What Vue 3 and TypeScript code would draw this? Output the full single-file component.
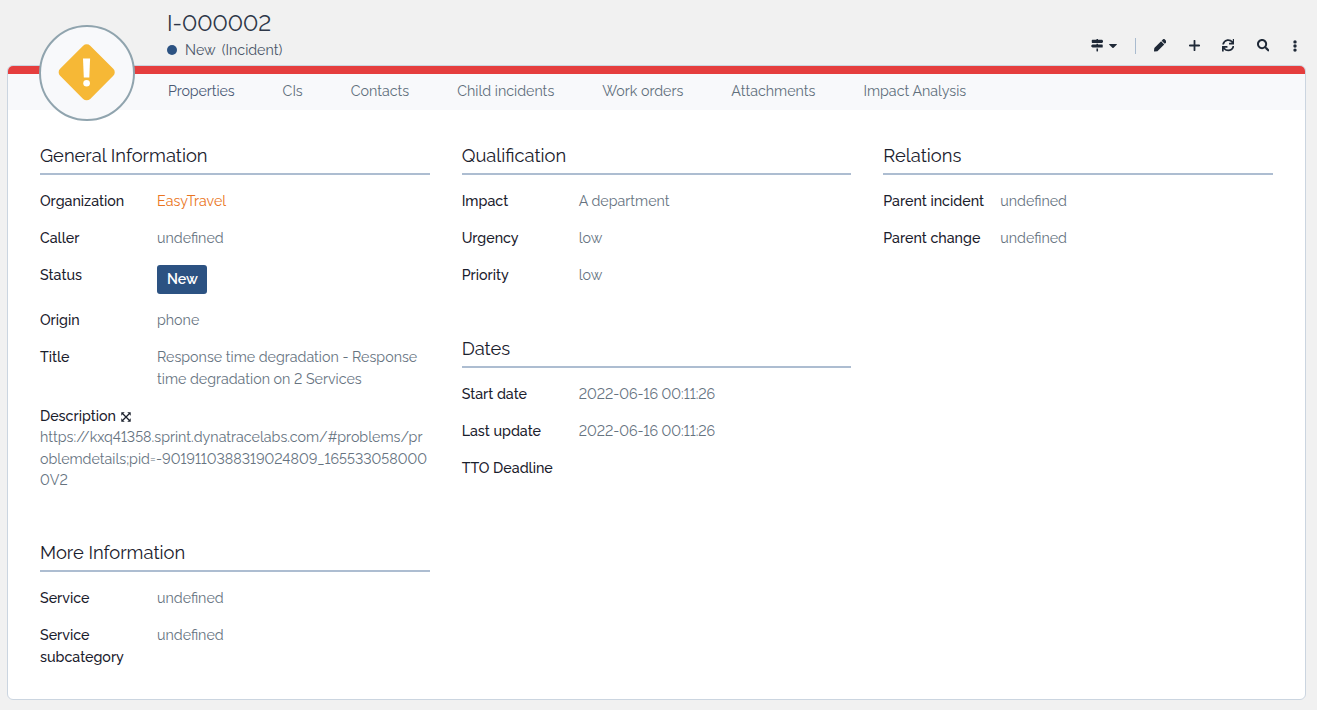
<script setup lang="ts">
interface Field { label: string; value: string; kind?: 'link' | 'badge' | 'block' }
interface Section { title: string; fields: Field[] }

const tabs: string[] = [
  'Properties', 'CIs', 'Contacts', 'Child incidents', 'Work orders', 'Attachments', 'Impact Analysis',
]

const columns: Section[][] = [
  [
    {
      title: 'General Information',
      fields: [
        { label: 'Organization', value: 'EasyTravel', kind: 'link' },
        { label: 'Caller', value: 'undefined' },
        { label: 'Status', value: 'New', kind: 'badge' },
        { label: 'Origin', value: 'phone' },
        { label: 'Title', value: 'Response time degradation - Response time degradation on 2 Services' },
        {
          label: 'Description',
          value: 'https://kxq41358.sprint.dynatracelabs.com/#problems/problemdetails;pid=-9019110388319024809_1655330580000V2',
          kind: 'block',
        },
      ],
    },
    {
      title: 'More Information',
      fields: [
        { label: 'Service', value: 'undefined' },
        { label: 'Service subcategory', value: 'undefined' },
      ],
    },
  ],
  [
    {
      title: 'Qualification',
      fields: [
        { label: 'Impact', value: 'A department' },
        { label: 'Urgency', value: 'low' },
        { label: 'Priority', value: 'low' },
      ],
    },
    {
      title: 'Dates',
      fields: [
        { label: 'Start date', value: '2022-06-16 00:11:26' },
        { label: 'Last update', value: '2022-06-16 00:11:26' },
        { label: 'TTO Deadline', value: '' },
      ],
    },
  ],
  [
    {
      title: 'Relations',
      fields: [
        { label: 'Parent incident', value: 'undefined' },
        { label: 'Parent change', value: 'undefined' },
      ],
    },
  ],
]
</script>

<template>
  <main class="page">
    <header class="header">
      <div class="heading">
        <h1 class="name">I-000002</h1>
        <div class="state">
          <i class="dot"></i>
          <span>New</span>
          <span class="kind">(Incident)</span>
        </div>
      </div>
      <nav class="tools">
        <svg class="signs" viewBox="0 0 512 512"><path d="M507.31 84.69L464 41.37c-6-6-14.14-9.37-22.63-9.37H288V16c0-8.84-7.16-16-16-16h-32c-8.84 0-16 7.16-16 16v16H56c-13.25 0-24 10.75-24 24v80c0 13.25 10.75 24 24 24h385.37c8.49 0 16.62-3.37 22.63-9.37l43.31-43.31c6.25-6.26 6.25-16.38 0-22.63zM224 496c0 8.84 7.16 16 16 16h32c8.84 0 16-7.16 16-16V384h-64v112zm232-272H288v-32h-64v32H70.63c-8.49 0-16.62 3.37-22.63 9.37L4.69 276.69c-6.25 6.25-6.25 16.38 0 22.63L48 342.63c6 6 14.14 9.37 22.63 9.37H456c13.25 0 24-10.75 24-24v-80c0-13.25-10.75-24-24-24z" /></svg>
        <svg class="caret" viewBox="0 0 8 4"><path d="M.6 0h6.8q.9.1.3.8L4.6 3.7q-.6.5-1.2 0L.3.8Q-.3.1.6 0z" /></svg>
        <i class="separator"></i>
        <svg class="pen" viewBox="0 0 512 512"><path d="M290.74 93.24l128.02 128.02-277.99 277.99-114.14 12.6C11.35 513.54-1.56 500.62.14 485.34l12.7-114.22 277.9-277.88zm207.2-19.06l-60.11-60.11c-18.75-18.75-49.16-18.75-67.91 0l-56.55 56.55 128.02 128.02 56.55-56.55c18.75-18.76 18.75-49.16 0-67.91z" /></svg>
        <svg class="plus" viewBox="0 0 11 11"><path d="M5.5.8v9.4M.8 5.5h9.4" fill="none" stroke="#1f2937" stroke-width="1.8" stroke-linecap="round" /></svg>
        <svg class="sync" viewBox="0 0 512 512"><path d="M440.65 12.57l4 82.77A247.16 247.16 0 0 0 255.83 8C134.73 8 33.91 94.92 12.29 209.82A12 12 0 0 0 24.09 224h49.05a12 12 0 0 0 11.67-9.26 175.91 175.91 0 0 1 317-56.94l-101.46-4.86a12 12 0 0 0-12.57 12v47.41a12 12 0 0 0 12 12H500a12 12 0 0 0 12-12V12a12 12 0 0 0-12-12h-47.37a12 12 0 0 0-11.98 12.57zM255.83 432a175.61 175.61 0 0 1-146-77.8l101.8 4.87a12 12 0 0 0 12.57-12v-47.4a12 12 0 0 0-12-12H12a12 12 0 0 0-12 12V500a12 12 0 0 0 12 12h47.35a12 12 0 0 0 12-12.6l-4.15-82.57A247.17 247.17 0 0 0 255.83 504c121.11 0 221.93-86.92 243.55-201.82a12 12 0 0 0-11.8-14.18h-49.05a12 12 0 0 0-11.67 9.26A175.86 175.86 0 0 1 255.83 432z" /></svg>
        <svg class="search" viewBox="0 0 512 512"><path d="M505 442.7L405.3 343c-4.5-4.5-10.6-7-17-7H372c27.6-35.3 44-79.7 44-128C416 93.1 322.9 0 208 0S0 93.1 0 208s93.1 208 208 208c48.3 0 92.7-16.4 128-44v16.3c0 6.4 2.5 12.5 7 17l99.7 99.7c9.4 9.4 24.6 9.4 33.9 0l28.3-28.3c9.4-9.4 9.4-24.6.1-34zM208 336c-70.7 0-128-57.2-128-128 0-70.7 57.2-128 128-128 70.7 0 128 57.2 128 128 0 70.7-57.2 128-128 128z" /></svg>
        <svg class="more" viewBox="0 0 4 12"><circle cx="2" cy="1.9" r="1.7" /><circle cx="2" cy="6" r="1.7" /><circle cx="2" cy="10.1" r="1.7" /></svg>
      </nav>
    </header>

    <section class="card">
      <div class="stripe"></div>
      <nav class="tabs">
        <a v-for="(tab, i) in tabs" :key="tab" class="tab" :class="{ active: i === 0 }">{{ tab }}</a>
      </nav>
      <div class="columns">
        <div v-for="(column, c) in columns" :key="c" class="column">
          <section v-for="section in column" :key="section.title">
            <h2 class="title">{{ section.title }}</h2>
            <div class="fields">
              <div v-for="field in section.fields" :key="field.label" class="field" :class="field.kind">
                <div class="label">
                  {{ field.label }}
                  <svg v-if="field.kind === 'block'" class="expand" viewBox="0 0 10 10">
                    <path d="M2 2l6 6M8 2L2 8" fill="none" stroke="currentColor" stroke-width="1.3" />
                    <path d="M.3.3h3.4L.3 3.7zM9.7.3v3.4L6.3.3zM.3 9.7V6.3l3.4 3.4zM9.7 9.7H6.3l3.4-3.4z" />
                  </svg>
                </div>
                <div class="value"><span>{{ field.value }}</span></div>
              </div>
            </div>
          </section>
        </div>
      </div>
    </section>

    <div class="medallion">
      <svg viewBox="0 0 96 96">
        <circle cx="48" cy="48" r="47" fill="#f8f9fb" stroke="#90a4ae" stroke-width="2" />
        <rect x="26.4" y="26" width="42.6" height="42.6" rx="5" fill="#f6b836" transform="rotate(45 47.7 47.3)" />
        <path d="M44 33.6h7.1l-.8 18.8h-5.5z" fill="#fff" />
        <circle cx="47.6" cy="58.3" r="3.3" fill="#fff" />
      </svg>
    </div>
  </main>
</template>

<style>
html, body { background: #f1f1f1; overflow: hidden; }
</style>

<style scoped>
.page {
  position: relative;
  box-sizing: border-box;
  width: 1317px;
  height: 710px;
  padding: 0 11px 10px 7px;
  display: flex;
  flex-direction: column;
  background: #f1f1f1;
  font-family: Raleway, Lato, sans-serif;
  font-variant-numeric: lining-nums;
  font-size: 14.26px;
  line-height: 21.33px;
  color: #1a202c;
}
.header { height: 65px; flex: none; display: flex; justify-content: space-between; }
.heading { padding: 8px 0 0 160px; }
.name { margin: 0; font-size: 22.3px; font-weight: 400; line-height: 30px; color: #2d3748; }
.state { display: flex; align-items: center; height: 24px; color: #4a5568; }
.state span { padding-top: 1px; }
.dot { width: 10px; height: 10px; margin-right: 8px; border-radius: 50%; background: #2c5282; }
.kind { margin-left: 6px; }
.tools { display: flex; align-items: center; height: 20px; padding: 35.5px 9.5px 0 0; }
.tools svg { display: block; fill: #1f2937; flex: none; }
.signs { width: 12.5px; height: 12.5px; }
.caret { width: 8px; height: 4px; margin-left: 5.5px; }
.separator { width: 1px; height: 16px; margin: 0 18px; background: #a9bbcf; }
.pen { width: 12.5px; height: 12.5px; }
.plus { width: 11px; height: 11px; margin-left: 22.5px; }
.sync { width: 12.5px; height: 12.5px; margin-left: 22px; }
.search { width: 12.5px; height: 12.5px; margin-left: 22.5px; }
.more { width: 4px; height: 12px; margin-left: 23.5px; }
.card {
  flex: 1;
  box-sizing: border-box;
  border: 1px solid #cbd5e0;
  border-radius: 6px;
  background: #fff;
  overflow: hidden;
}
.stripe { height: 8px; background: #e53e3e; }
.tabs { height: 36px; padding-left: 160px; display: flex; gap: 48px; background: #f8f9fb; color: #606f7b; }
.tab { line-height: 34px; }
.tab.active { color: #4a5a75; letter-spacing: -0.08px; }
.columns { display: grid; grid-template-columns: repeat(3, 1fr); gap: 32px; padding: 35px 32px 0; }
.column { display: flex; flex-direction: column; gap: 51px; }
.title {
  margin: 0 0 16px;
  padding-bottom: 7px;
  border-bottom: 2px solid #adbdd1;
  font-size: 18.34px;
  font-weight: 400;
  line-height: 21px;
}
.fields { display: flex; flex-direction: column; gap: 15.85px; }
.field { display: grid; grid-template-columns: 117px 1fr; }
.label { font-weight: 500; }
.value { color: #66737f; overflow-wrap: anywhere; }
.link .value { color: #ea7420; }
.badge .value { display: flex; }
.badge .value span {
  padding: 0 9.2px 0 10px;
  border-radius: 3px;
  background: #2c5282;
  color: #fff;
  font-weight: 600;
  line-height: 29px;
}
.block { display: block; }
.block .value { word-break: break-all; }
.expand { width: 10px; height: 10px; margin-left: 1.5px; fill: #1a202c; vertical-align: -1px; }
.medallion { position: absolute; left: 39px; top: 25px; width: 96px; height: 96px; }
.medallion svg { display: block; }
</style>
